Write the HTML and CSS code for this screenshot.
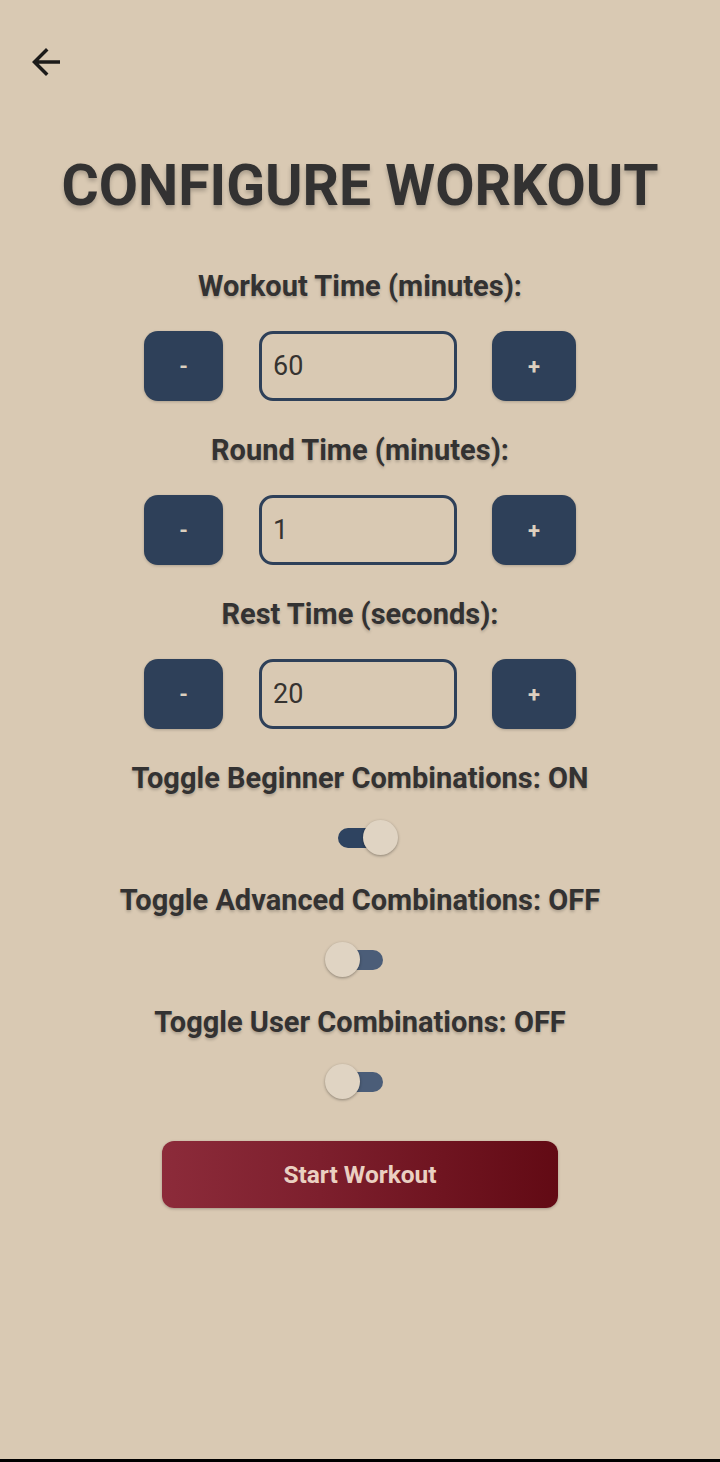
FILE: index.html
```html
<!DOCTYPE html>
<html>
<head>
<meta charset="utf-8">
<link rel="stylesheet" href="styles.css">
</head>
<body>
<div class="page">
  <header class="appbar">
    <svg class="back" viewBox="0 0 24 24" width="42" height="42"><path d="M20 11H7.83l5.59-5.59L12 4l-8 8 8 8 1.41-1.41L7.83 13H20v-2z" fill="#1c1b1a"/></svg>
  </header>
  <h1 class="title">CONFIGURE WORKOUT</h1>

  <div class="label first">Workout Time (minutes):</div>
  <div class="stepper">
    <div class="btn minus">-</div>
    <div class="field">60</div>
    <div class="btn plus">+</div>
  </div>

  <div class="label">Round Time (minutes):</div>
  <div class="stepper">
    <div class="btn minus">-</div>
    <div class="field">1</div>
    <div class="btn plus">+</div>
  </div>

  <div class="label">Rest Time (seconds):</div>
  <div class="stepper">
    <div class="btn minus">-</div>
    <div class="field">20</div>
    <div class="btn plus">+</div>
  </div>

  <div class="label">Toggle Beginner Combinations: ON</div>
  <div class="switch on"><div class="track"></div><div class="thumb"></div></div>

  <div class="label tl">Toggle Advanced Combinations: OFF</div>
  <div class="switch"><div class="track"></div><div class="thumb"></div></div>

  <div class="label tl">Toggle User Combinations: OFF</div>
  <div class="switch"><div class="track"></div><div class="thumb"></div></div>

  <div class="start">Start Workout</div>

  <div class="navline"></div>
</div>
</body>
</html>
```
FILE: styles.css
```css
html, body {
  margin: 0;
  padding: 0;
  background: #d9c9b3;
}
.page {
  height: 1462px;
  display: flex;
  flex-direction: column;
  align-items: center;
  font-family: Roboto, "Liberation Sans", sans-serif;
  color: #333232;
  overflow: hidden;
}
.appbar {
  align-self: stretch;
  height: 110px;
  position: relative;
}
.back {
  position: absolute;
  left: 25px;
  top: 41px;
}
.title {
  margin: 46px 0 0;
  font-size: 57px;
  line-height: 60px;
  font-weight: 700;
  color: #333232;
  text-shadow: 0 3px 4px rgba(0,0,0,0.22);
  letter-spacing: 0;
}
.label {
  margin-top: 34px;
  font-size: 29px;
  line-height: 30px;
  font-weight: 700;
  text-shadow: 0 2px 3px rgba(0,0,0,0.2);
}
.label.first {
  margin-top: 55px;
}
.label.tl {
  margin-top: 27px;
}
.stepper {
  margin-top: 30px;
  display: flex;
  align-items: center;
  height: 70px;
}
.btn {
  height: 70px;
  border-radius: 14px;
  background: #2e4059;
  color: #ddd0bf;
  font-size: 22px;
  font-weight: 700;
  display: flex;
  align-items: center;
  justify-content: center;
  box-shadow: 0 1px 3px rgba(0,0,0,0.2);
}
.btn.minus { width: 79px; }
.btn.plus { width: 84px; }
.field {
  box-sizing: border-box;
  width: 198px;
  height: 70px;
  margin: 0 35px 0 36px;
  border: 3px solid #2e4059;
  border-radius: 14px;
  padding-left: 11px;
  display: flex;
  align-items: center;
  font-size: 27px;
  color: #363330;
}
.switch {
  margin-top: 25px;
  width: 75px;
  height: 40px;
  position: relative;
}
.track {
  position: absolute;
  left: 15px;
  top: 10px;
  width: 45px;
  height: 20px;
  border-radius: 10px;
  background: #4b5d78;
}
.switch.on .track {
  background: #2e4360;
}
.thumb {
  position: absolute;
  top: 2px;
  left: 2px;
  width: 35px;
  height: 35px;
  border-radius: 50%;
  background: #e0d4c3;
  box-shadow: 0 1px 3px rgba(0,0,0,0.35);
}
.switch.on .thumb {
  left: 40px;
}
.start {
  margin-top: 39px;
  width: 396px;
  height: 67px;
  border-radius: 12px;
  background: linear-gradient(90deg, #8c2b3a 0%, #7d1f2d 40%, #620a14 100%);
  color: #ead0c1;
  font-size: 24.5px;
  font-weight: 700;
  display: flex;
  align-items: center;
  justify-content: center;
  box-shadow: 0 1px 3px rgba(0,0,0,0.25);
}
.navline {
  margin-top: auto;
  align-self: stretch;
  height: 3px;
  background: #000;
}
```
